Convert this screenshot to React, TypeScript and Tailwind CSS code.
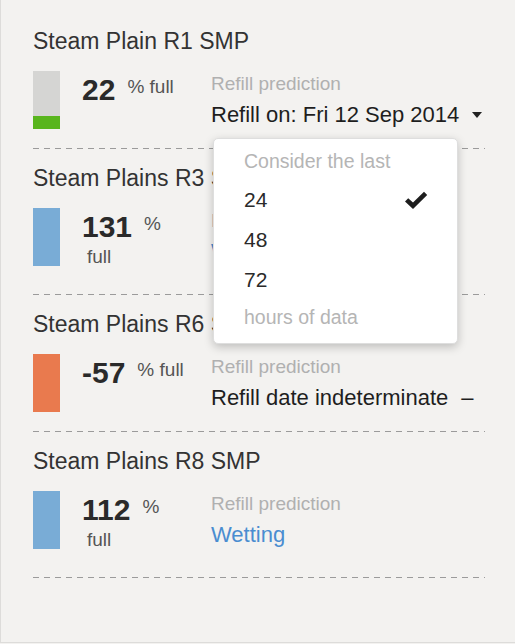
import React from "react";

type Site = {
  name: string;
  pct: number;
  color: string;
  wrap: boolean;
  kind: "date" | "indeterminate" | "wetting";
};

const sites: Site[] = [
  { name: "Steam Plain R1 SMP", pct: 22, color: "#58b51d", wrap: false, kind: "date" },
  { name: "Steam Plains R3 SMP", pct: 131, color: "#79acd6", wrap: true, kind: "wetting" },
  { name: "Steam Plains R6 SMP", pct: -57, color: "#e97a4e", wrap: false, kind: "indeterminate" },
  { name: "Steam Plains R8 SMP", pct: 112, color: "#79acd6", wrap: true, kind: "wetting" },
];

function Bar({ pct, color }: { pct: number; color: string }) {
  const fill = pct < 0 || pct > 100 ? 100 : pct;
  return (
    <div className="flex h-[58px] w-[27px] shrink-0 flex-col justify-end bg-[#d5d5d3]">
      <div style={{ height: `${fill}%`, backgroundColor: color }} />
    </div>
  );
}

function Caret() {
  return (
    <svg width="10" height="6" viewBox="0 0 10 6" className="ml-[13px] inline-block align-middle">
      <polygon points="0,0 10,0 5,6" fill="#222" />
    </svg>
  );
}

function Check() {
  return (
    <svg width="24" height="19" viewBox="0 0 24 19">
      <path d="M1 10.5 L4.2 7.3 L9 11.6 L20 0.8 L23.2 4 L9 18 Z" fill="#1e1e1e" />
    </svg>
  );
}

function Dashes() {
  return (
    <div className="h-px w-full bg-[linear-gradient(to_right,#9b9b9b_6px,transparent_6px)] bg-[length:11px_1px] bg-repeat-x" />
  );
}

function Section({ site, first }: { site: Site; first: boolean }) {
  return (
    <div className={first ? "pt-[27px]" : "pt-[15px]"}>
      <div className="text-[23px] leading-[28px] text-[#333]">{site.name}</div>
      <div className="mt-[16px] flex items-start pb-[19px]">
        <Bar pct={site.pct} color={site.color} />
        <div className="ml-[22px] w-[129px] shrink-0 pt-[3px]">
          <div className="flex items-start">
            <span className="text-[30px] font-bold leading-[32px] text-[#2a2a2a]">{site.pct}</span>
            <span className="ml-[12px] mt-[2px] text-[19px] leading-[22px] text-[#555]">
              {site.wrap ? "%" : "% full"}
            </span>
          </div>
          {site.wrap && (
            <div className="pb-[4px] pl-[5px] text-[19px] leading-[28px] text-[#555]">full</div>
          )}
        </div>
        <div className="pt-[1px]">
          <div className="text-[19px] leading-[24px] text-[#b0b0b0]">Refill prediction</div>
          <div className="mt-[5px] flex items-center text-[22px] leading-[28px] text-[#1e1e1e]">
            {site.kind === "date" && (
              <>
                <span>Refill on: Fri 12 Sep 2014</span>
                <Caret />
              </>
            )}
            {site.kind === "indeterminate" && (
              <>
                <span>Refill date indeterminate</span>
                <span className="ml-[13px]">–</span>
              </>
            )}
            {site.kind === "wetting" && <span className="text-[#4a8dd0]">Wetting</span>}
          </div>
        </div>
      </div>
      <Dashes />
    </div>
  );
}

export default function App() {
  return (
    <div className="h-[644px] w-[515px] bg-[#f3f2f0] font-['Liberation_Sans',Arial,sans-serif]">
      <div className="relative h-[643px] border-b border-l border-[#dddcda] pl-[32px] pr-[30px]">
        {sites.map((s, i) => (
          <Section key={s.name} site={s} first={i === 0} />
        ))}

        <div className="absolute left-[212px] top-[138px] w-[245px] rounded-[5px] border border-[#dedede] bg-white pb-[14px] pl-[30px] pt-[10px] shadow-[0_3px_10px_rgba(0,0,0,0.22)]">
          <div className="text-[19.5px] leading-[24px] text-[#b5b5b5]">Consider the last</div>
          <div className="mt-[7px]">
            {[24, 48, 72].map((h) => (
              <div key={h} className="flex h-[40px] items-center justify-between pr-[29px] text-[21px] text-[#2a2a2a]">
                <span>{h}</span>
                {h === 24 && <Check />}
              </div>
            ))}
          </div>
          <div className="mt-[5px] text-[19.5px] leading-[24px] text-[#b5b5b5]">hours of data</div>
        </div>
      </div>
    </div>
  );
}
